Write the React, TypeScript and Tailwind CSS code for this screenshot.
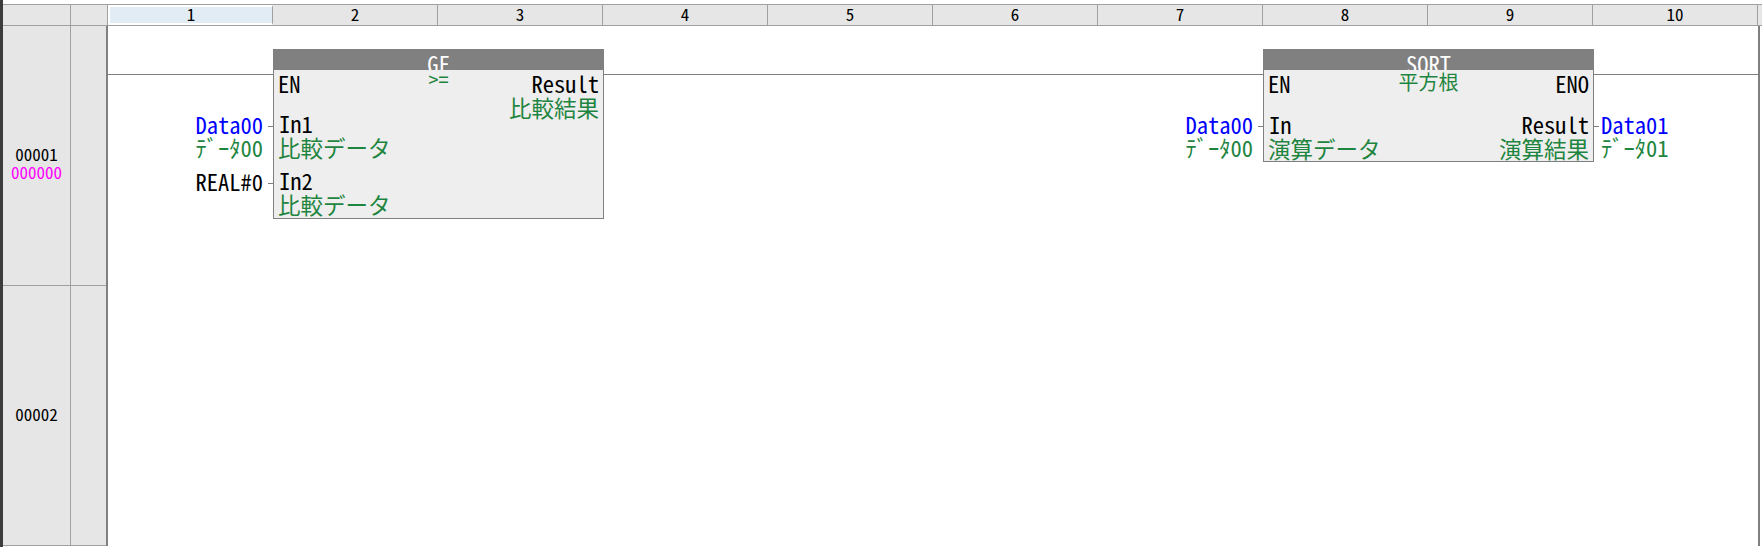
const jp = "font-['Noto_Sans_CJK_JP',sans-serif] [font-feature-settings:'hwid']";
const columns = [1, 2, 3, 4, 5, 6, 7, 8, 9, 10];

const Label = ({ name, comment, black }: { name: string; comment?: string; black?: boolean }) => (
  <div className="flex items-start justify-end gap-[5px]">
    <div className="flex flex-col items-end">
      <span className={`h-[23px] leading-[23px] ${black ? "text-black" : "text-[#0000ff]"}`}>{name}</span>
      {comment && <span className="h-[23px] leading-[23px] text-[#1e8540]">{comment}</span>}
    </div>
    <div className="mt-[13px] h-px w-[5px] bg-[#808080]" />
  </div>
);

const Pin = ({ name, comment, right }: { name?: string; comment?: string; right?: boolean }) => (
  <div className={`flex flex-col ${right ? "items-end" : "items-start"}`}>
    {name && <span className="h-[23px] leading-[23px] text-black">{name}</span>}
    {comment && <span className={`h-[24px] leading-[24px] text-[#1e8540] ${right ? "" : "-ml-[1px]"}`}>{comment}</span>}
  </div>
);

const BlockHeader = ({ title, subtitle, subClass }: { title: string; subtitle: string; subClass: string }) => (
  <>
    <div className="h-[20px] overflow-hidden bg-[#808080] text-center leading-[26px] text-white">{title}</div>
    <div className={`absolute left-0 right-0 text-center text-[20px] leading-[24px] text-[#1e8540] ${subClass}`}>{subtitle}</div>
  </>
);

export default function App() {
  return (
    <div className={`flex h-[547px] w-[1762px] overflow-hidden border-l-[3px] border-[#3c3c3c] bg-white text-[22.5px] ${jp}`}>
      <div className="flex w-[1759px] flex-col">
        <div className="h-[5px] shrink-0 border-b border-[#a0a0a0]" />

        {/* column header */}
        <div className="flex h-[21px] shrink-0 border-b border-[#a0a0a0] bg-[#e6e6e6] text-[17px] leading-[18px] text-black">
          <div className="w-[68px] shrink-0 border-r border-[#a0a0a0]" />
          <div className="w-[37px] shrink-0 border-r border-[#a0a0a0]" />
          {columns.map((c) => (
            <div
              key={c}
              className={`w-[165px] shrink-0 border-r border-[#a0a0a0] text-center ${c === 1 ? "border-y-[2px] border-l-[2px] border-y-white border-l-white bg-[#e1ecf5] leading-[14px]" : ""}`}
            >
              {c}
            </div>
          ))}
          <div className="flex-1" />
        </div>

        {/* rung 1 */}
        <div className="flex h-[260px] shrink-0">
          <div className="flex w-[68px] shrink-0 flex-col items-center justify-center border-b border-r border-[#a0a0a0] bg-[#e6e6e6] pt-[14px] text-[17px] leading-[18px]">
            <span className="text-black">00001</span>
            <span className="text-[#ff00ff]">000000</span>
          </div>
          <div className="w-[35px] shrink-0 border-b border-[#a0a0a0] bg-[#e6e6e6]" />
          <div className="w-[2px] shrink-0 bg-[#808080]" />
          <div className="relative grid w-[1650px] grid-cols-[repeat(10,165px)] items-start">
            <div className="absolute left-0 right-0 top-[48px] h-px bg-[#808080]" />
            <div className="col-start-1 mt-[87px] flex flex-col gap-[11px]">
              <Label name="Data00" comment="ﾃﾞｰﾀ00" />
              <Label name="REAL#0" black />
            </div>
            <div className="relative col-span-2 col-start-2 -mr-px mt-[23px] flex h-[170px] flex-col border border-[#808080] bg-[#eeeeee]">
              <BlockHeader title="GF" subtitle=">=" subClass="top-[17px]" />
              <div className="flex justify-between pl-[4px] pr-[4px] pt-[2px]">
                <span className="h-[23px] leading-[23px] text-black">EN</span>
                <Pin name="Result" comment="比較結果" right />
              </div>
              <div className="-mt-[7px] flex flex-col gap-[10px] pl-[5px]">
                <Pin name="In1" comment="比較データ" />
                <Pin name="In2" comment="比較データ" />
              </div>
            </div>
            <div className="col-start-7 mt-[87px] flex flex-col">
              <Label name="Data00" comment="ﾃﾞｰﾀ00" />
            </div>
            <div className="relative col-span-2 col-start-8 -mr-px mt-[23px] flex h-[113px] flex-col border border-[#808080] bg-[#eeeeee]">
              <BlockHeader title="SQRT" subtitle="平方根" subClass="top-[20px]" />
              <div className="flex justify-between pl-[4px] pr-[4px] pt-[2px]">
                <span className="h-[23px] leading-[23px] text-black">EN</span>
                <span className="h-[23px] leading-[23px] text-black">ENO</span>
              </div>
              <div className="mt-[18px] flex justify-between pl-[5px] pr-[4px]">
                <Pin name="In" comment="演算データ" />
                <Pin name="Result" comment="演算結果" right />
              </div>
            </div>
            <div className="col-start-10 mt-[87px] flex items-start gap-[2px]">
              <div className="mt-[13px] h-px w-[6px] bg-[#808080]" />
              <div className="flex flex-col">
                <span className="h-[23px] leading-[23px] text-[#0000ff]">Data01</span>
                <span className="h-[23px] leading-[23px] text-[#1e8540]">ﾃﾞｰﾀ01</span>
              </div>
            </div>
          </div>
          <div className="w-[2px] shrink-0 bg-[#808080]" />
        </div>

        {/* rung 2 */}
        <div className="flex h-[260px] shrink-0">
          <div className="flex w-[68px] shrink-0 items-center justify-center border-b border-r border-[#a0a0a0] bg-[#e6e6e6] pb-[4px] text-[17px] text-black">
            00002
          </div>
          <div className="w-[35px] shrink-0 border-b border-[#a0a0a0] bg-[#e6e6e6]" />
          <div className="w-[2px] shrink-0 bg-[#808080]" />
          <div className="w-[1650px]" />
          <div className="w-[2px] shrink-0 bg-[#808080]" />
        </div>
      </div>
    </div>
  );
}
